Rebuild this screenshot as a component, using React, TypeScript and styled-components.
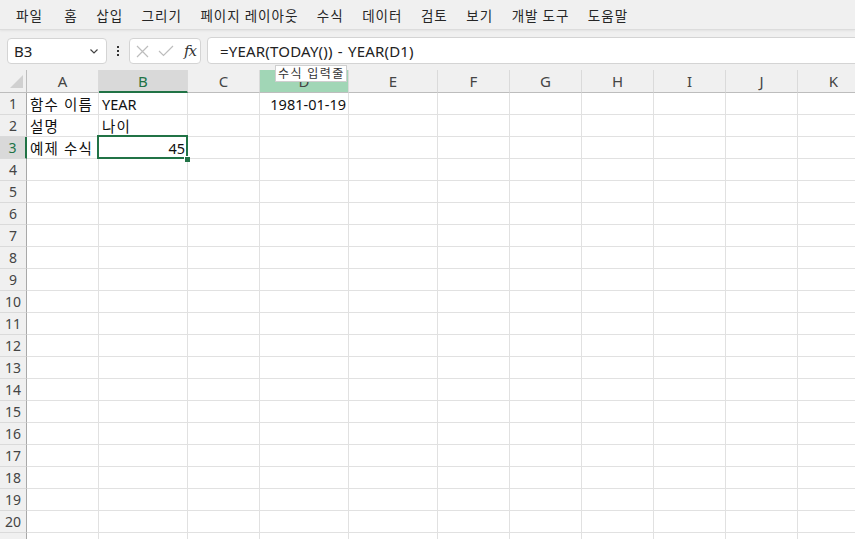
import React from 'react';
import styled, { createGlobalStyle, css } from 'styled-components';

const GlobalStyle = createGlobalStyle`
  html, body {
    margin: 0;
    padding: 0;
  }
  body {
    width: 855px;
    height: 539px;
    overflow: hidden;
    background: #fff;
    font-family: "Noto Sans", "Noto Sans CJK KR", sans-serif;
  }
`;

const GREEN = '#217346';

const Window = styled.div`
  position: relative;
  display: flex;
  flex-direction: column;
  width: 855px;
  height: 539px;
  overflow: hidden;
`;

const MenuBar = styled.nav`
  position: relative;
  z-index: 1;
  display: flex;
  align-items: center;
  gap: 18.5px;
  height: 29px;
  padding-left: 16px;
  background: #f0f0f0;
  border-bottom: 1px solid #dcdcdc;
  box-shadow: 0 1px 2px rgba(0, 0, 0, 0.06);
  font-family: "Noto Sans CJK KR", sans-serif;
  font-size: 13.5px;
  letter-spacing: 1px;
  color: #262626;
`;

const MenuItem = styled.span<{ $extra?: boolean }>`
  white-space: nowrap;
  ${({ $extra }) => $extra && 'margin-right: 3px;'}
`;

const FormulaBar = styled.div`
  display: flex;
  align-items: flex-start;
  height: 40px;
  box-sizing: border-box;
  padding: 7px 0 0 7px;
  background: #f0f0f0;
`;

const NameBox = styled.div`
  display: flex;
  align-items: center;
  justify-content: space-between;
  box-sizing: border-box;
  width: 100px;
  height: 26px;
  margin-top: 1px;
  padding: 0 6px 0 6px;
  background: #fff;
  border: 1px solid #d4d4d4;
  border-radius: 4px;
  font-size: 15px;
  color: #222;
`;

const Dots = styled.div`
  display: flex;
  flex-direction: column;
  align-items: center;
  justify-content: center;
  gap: 2px;
  width: 22px;
  height: 26px;
  margin-top: 1px;

  span {
    width: 2px;
    height: 2px;
    background: #333;
  }
`;

const FuncBox = styled.div`
  display: flex;
  align-items: center;
  box-sizing: border-box;
  width: 72px;
  height: 26px;
  margin-top: 1px;
  padding: 0 4px 0 6px;
  gap: 9px;
  background: #fff;
  border: 1px solid #d4d4d4;
  border-radius: 4px;
`;

const Fx = styled.span`
  margin-left: 1px;
  font-family: "DejaVu Serif", "Liberation Serif", serif;
  font-style: italic;
  font-size: 15px;
  color: #333;
  letter-spacing: -1px;
`;

const FormulaInput = styled.div`
  display: flex;
  align-items: center;
  box-sizing: border-box;
  flex: 1;
  height: 27px;
  margin-left: 6px;
  margin-right: -8px;
  padding-left: 12px;
  background: #fff;
  border: 1px solid #d4d4d4;
  border-radius: 4px;
  font-size: 15px;
  letter-spacing: 0.2px;
  word-spacing: 1px;
  color: #222;
`;

const Sheet = styled.div`
  display: grid;
  grid-template-columns: 27px 72px 89px 72px 89px 89px repeat(6, 72px);
  grid-template-rows: 23px;
  grid-auto-rows: 22px;
  flex: 1;
  overflow: hidden;
`;

const Corner = styled.div`
  position: relative;
  box-sizing: border-box;
  background: #f0f0f0;
  border-right: 1px solid #bdbdbd;
  border-bottom: 1px solid #bdbdbd;

  svg {
    position: absolute;
    right: 3px;
    bottom: 4px;
  }
`;

const ColHead = styled.div<{ $active?: boolean; $hover?: boolean }>`
  display: flex;
  align-items: center;
  justify-content: center;
  box-sizing: border-box;
  background: #f0f0f0;
  border-right: 1px solid #dadada;
  border-bottom: 1px solid #bdbdbd;
  font-size: 15px;
  color: #444;

  ${({ $active }) =>
    $active &&
    css`
      background: #d9d9d9;
      border-bottom: 2px solid ${GREEN};
      color: ${GREEN};
    `}
  ${({ $hover }) =>
    $hover &&
    css`
      background: #a1d6b6;
    `}
`;

const RowHead = styled.div<{ $active?: boolean }>`
  display: flex;
  align-items: center;
  justify-content: center;
  box-sizing: border-box;
  background: #f0f0f0;
  border-right: 1px solid #a8a8a8;
  border-bottom: 1px solid #dadada;
  font-size: 14px;
  color: #444;

  ${({ $active }) =>
    $active &&
    css`
      background: #d9d9d9;
      border-right: 2px solid ${GREEN};
      color: ${GREEN};
    `}
`;

const Cell = styled.div<{ $right?: boolean; $active?: boolean; $hangul?: boolean }>`
  position: relative;
  display: flex;
  align-items: center;
  justify-content: ${({ $right }) => ($right ? 'flex-end' : 'flex-start')};
  box-sizing: border-box;
  padding: 0 2px 0 3px;
  border-right: 1px solid #e1e1e1;
  border-bottom: 1px solid #e1e1e1;
  font-size: 14.5px;
  letter-spacing: ${({ $hangul }) => ($hangul ? '1.2px' : '0')};
  color: #111;
  white-space: nowrap;

  ${({ $active }) =>
    $active &&
    css`
      &::after {
        content: '';
        position: absolute;
        inset: -2px -1px -1px -2px;
        border: 2px solid ${GREEN};
        pointer-events: none;
      }
      &::before {
        content: '';
        position: absolute;
        right: -3px;
        bottom: -4px;
        width: 5px;
        height: 5px;
        background: ${GREEN};
        border-left: 1px solid #fff;
        border-top: 1px solid #fff;
        z-index: 2;
      }
    `}
`;

const Tooltip = styled.div`
  position: absolute;
  left: 275px;
  top: 65px;
  z-index: 5;
  padding: 0 1px 0 2px;
  height: 15px;
  line-height: 14px;
  background: #fff;
  border: 1px solid #cfcfcf;
  font-family: "Noto Sans CJK KR", sans-serif;
  font-size: 12px;
  letter-spacing: 1.5px;
  color: #333;
`;

const menus = ['파일', '홈', '삽입', '그리기', '페이지 레이아웃', '수식', '데이터', '검토', '보기', '개발 도구', '도움말'];
const cols = ['A', 'B', 'C', 'D', 'E', 'F', 'G', 'H', 'I', 'J', 'K'];

type CellData = { text: string; right?: boolean };
const data: Record<string, CellData> = {
  A1: { text: '함수 이름' },
  B1: { text: 'YEAR' },
  D1: { text: '1981-01-19', right: true },
  A2: { text: '설명' },
  B2: { text: '나이' },
  A3: { text: '예제 수식' },
  B3: { text: '45', right: true },
};

const activeCol = 'B';
const activeRow = 3;
const hasHangul = (s?: string) => !!s && /[가-힣]/.test(s);

const Chevron = () => (
  <svg width="12" height="12" viewBox="0 0 12 12">
    <path d="M2.5 4.5 L6 8 L9.5 4.5" fill="none" stroke="#444" strokeWidth="1.2" />
  </svg>
);

const CrossIcon = () => (
  <svg width="13" height="13" viewBox="0 0 13 13">
    <path d="M1 1 L12 12 M12 1 L1 12" stroke="#bdbdbd" strokeWidth="1.2" />
  </svg>
);

const CheckIcon = () => (
  <svg width="16" height="12" viewBox="0 0 16 12">
    <path d="M1 6 L5.5 10.5 L15 1" fill="none" stroke="#bdbdbd" strokeWidth="1.2" />
  </svg>
);

const App = () => {
  const rows = Array.from({ length: 21 }, (_, i) => i + 1);

  return (
    <Window>
      <GlobalStyle />
      <MenuBar>
        {menus.map((m, i) => (
          <MenuItem key={m} $extra={i === 0}>
            {m}
          </MenuItem>
        ))}
      </MenuBar>

      <FormulaBar>
        <NameBox>
          <span>B3</span>
          <Chevron />
        </NameBox>
        <Dots>
          <span />
          <span />
          <span />
        </Dots>
        <FuncBox>
          <CrossIcon />
          <CheckIcon />
          <Fx>fx</Fx>
        </FuncBox>
        <FormulaInput>=YEAR(TODAY()) - YEAR(D1)</FormulaInput>
      </FormulaBar>

      <Sheet>
        <Corner>
          <svg width="13" height="13" viewBox="0 0 13 13">
            <polygon points="13,0 13,13 0,13" fill="#d0d0d0" />
          </svg>
        </Corner>
        {cols.map((c) => (
          <ColHead key={c} $active={c === activeCol} $hover={c === 'D'}>
            {c}
          </ColHead>
        ))}
        {rows.map((r) => (
          <React.Fragment key={r}>
            <RowHead $active={r === activeRow}>{r}</RowHead>
            {cols.map((c) => {
              const cell = data[`${c}${r}`];
              return (
                <Cell
                  key={c}
                  $right={cell?.right}
                  $hangul={hasHangul(cell?.text)}
                  $active={c === activeCol && r === activeRow}
                >
                  {cell?.text}
                </Cell>
              );
            })}
          </React.Fragment>
        ))}
      </Sheet>

      <Tooltip>수식 입력줄</Tooltip>
    </Window>
  );
};

export default App;
